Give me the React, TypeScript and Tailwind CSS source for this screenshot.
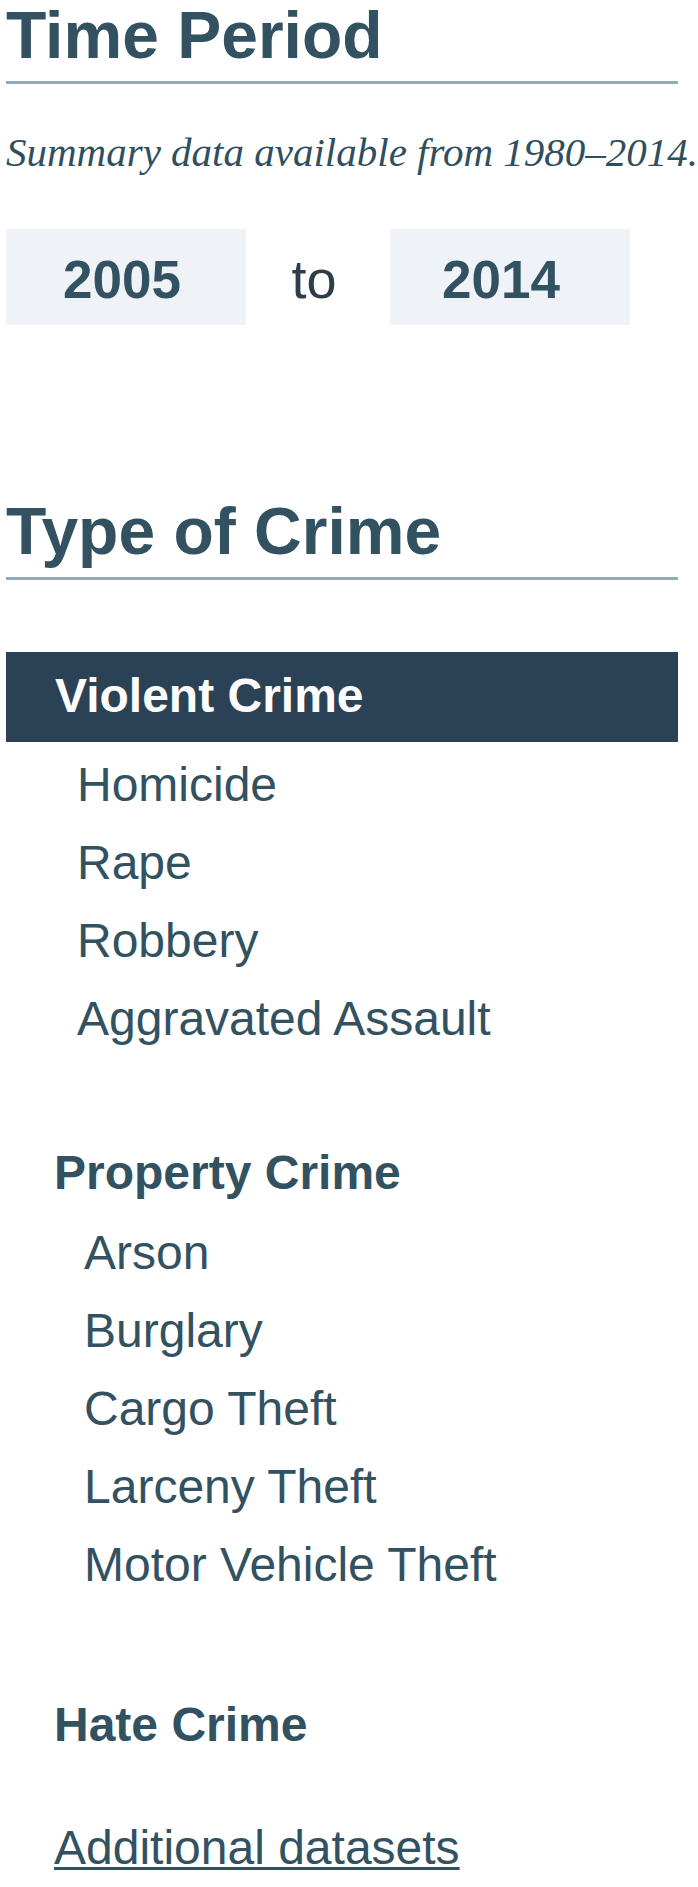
const VIOLENT = ["Homicide", "Rape", "Robbery", "Aggravated Assault"];
const PROPERTY = ["Arson", "Burglary", "Cargo Theft", "Larceny Theft", "Motor Vehicle Theft"];

function SectionTitle({ children }: { children: React.ReactNode }) {
  return (
    <h2 className="border-b-[3px] border-[#93a9bc] pb-[11px] text-[66px] font-bold leading-[70px] text-[#325161]">
      {children}
    </h2>
  );
}

function YearBox({ year, shift }: { year: string; shift: string }) {
  return (
    <div
      className={`flex h-[96px] w-[240px] items-center justify-center bg-[#eff3f8] pt-[5px] text-[53px] font-bold text-[#325161] ${shift}`}
    >
      {year}
    </div>
  );
}

export default function App() {
  return (
    <div className="w-[698px] bg-white pl-[6px] font-['Liberation_Sans',Arial,sans-serif]">
      <div className="w-[672px]">
        <section>
          <SectionTitle>Time Period</SectionTitle>
          <p className="mt-[48px] whitespace-nowrap font-['Liberation_Serif',Georgia,serif] text-[41px] italic leading-[40px] text-[#2f4f5e]">
            Summary data available from 1980–2014.
          </p>
          <div className="mt-[57px] flex items-center">
            <YearBox year="2005" shift="pr-[8px]" />
            <span className="w-[144px] pt-[5px] pr-[8px] text-center text-[54px] text-[#2e3d4c]">to</span>
            <YearBox year="2014" shift="pr-[18px]" />
          </div>
        </section>

        <section className="mt-[171px]">
          <SectionTitle>Type of Crime</SectionTitle>

          <div className="mt-[72px] flex h-[90px] items-center bg-[#2b4155] pb-[3px] pl-[49px] text-[48px] font-bold text-[#fcfcfc]">
            Violent Crime
          </div>
          <ul className="mt-[4px] pl-[71px] text-[48px] leading-[78px] text-[#325161]">
            {VIOLENT.map((name) => (
              <li key={name}>{name}</li>
            ))}
          </ul>

          <div className="mt-[76px] pl-[48px] text-[48px] font-bold leading-[78px] text-[#325161]">
            Property Crime
          </div>
          <ul className="mt-[2px] pl-[78px] text-[48px] leading-[78px] text-[#325161]">
            {PROPERTY.map((name) => (
              <li key={name}>{name}</li>
            ))}
          </ul>

          <div className="mt-[82px] pl-[48px] text-[48px] font-bold leading-[78px] text-[#325161]">
            Hate Crime
          </div>

          <div className="mt-[45px] pl-[48px] text-[48px] leading-[78px]">
            <a
              href="#"
              className="text-[#325161] underline decoration-[3px] underline-offset-[3px]"
            >
              Additional datasets
            </a>
          </div>
        </section>
      </div>
    </div>
  );
}
